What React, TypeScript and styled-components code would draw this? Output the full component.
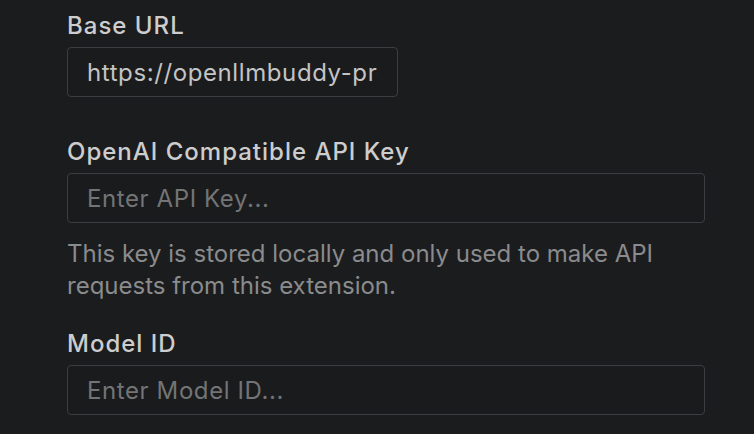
import React from "react";
import styled, { createGlobalStyle } from "styled-components";

const Global = createGlobalStyle`
  html, body {
    margin: 0;
    padding: 0;
    background: #1b1c1e;
  }
  body {
    font-family: Inter, "Noto Sans", "Liberation Sans", sans-serif;
    -webkit-font-smoothing: antialiased;
  }
`;

const Page = styled.div`
  width: 754px;
  height: 434px;
  box-sizing: border-box;
  padding: 12px 49px 0 67px;
  background: #1b1c1e;
  overflow: hidden;
`;

const Form = styled.div`
  display: flex;
  flex-direction: column;
  gap: 28px;
`;

const Field = styled.div`
  display: flex;
  flex-direction: column;
`;

const Label = styled.label`
  font-size: 24px;
  line-height: 28px;
  font-weight: 500;
  letter-spacing: 1px;
  color: #cdcdcd;
  margin-bottom: 7px;
`;

const Input = styled.input<{ $width?: number }>`
  box-sizing: border-box;
  width: ${(p) => (p.$width ? `${p.$width}px` : "100%")};
  height: 50px;
  padding: 0 19px;
  margin: 0 0 13px;
  background: #1a1b1d;
  border: 1px solid #3c3d40;
  border-radius: 4px;
  font-family: Inter, "Noto Sans", "Liberation Sans", sans-serif;
  font-size: 24px;
  letter-spacing: 0.6px;
  color: #c4c4c4;
  outline: none;
  &::placeholder {
    color: #737476;
  }
`;

const Help = styled.p`
  margin: 2px 0 0;
  font-size: 24px;
  line-height: 32px;
  color: #8a8b8d;
`;

export default function App() {
  return (
    <Page>
      <Global />
      <Form>
        <Field>
          <Label>Base URL</Label>
          <Input
            $width={331}
            readOnly
            value="https://openllmbuddy-production.up.railway.app/v1"
          />
        </Field>
        <Field>
          <Label>OpenAI Compatible API Key</Label>
          <Input placeholder="Enter API Key..." />
          <Help>
            This key is stored locally and only used to make API requests from
            this extension.
          </Help>
        </Field>
        <Field>
          <Label>Model ID</Label>
          <Input placeholder="Enter Model ID..." />
        </Field>
      </Form>
    </Page>
  );
}
